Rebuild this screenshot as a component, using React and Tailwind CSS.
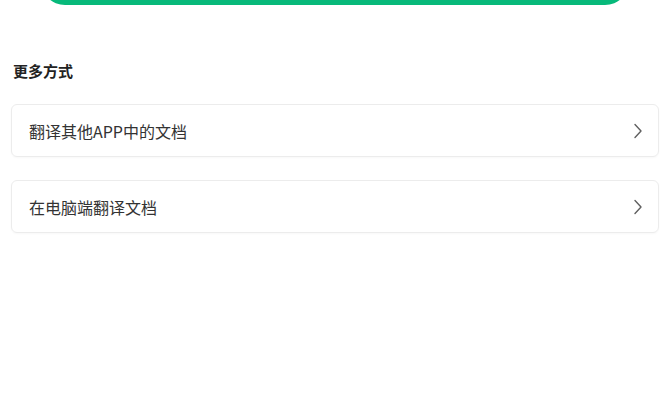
const items = ["翻译其他APP中的文档", "在电脑端翻译文档"];

const Chevron = () => (
  <svg width="10" height="16" viewBox="0 0 10 16" fill="none">
    <path d="M2 1.5 L8 8 L2 14.5" stroke="#5f5f5f" strokeWidth="1.4" strokeLinecap="round" strokeLinejoin="round" />
  </svg>
);

const App = () => {
  return (
    <div className="w-[670px] h-[415px] bg-white overflow-hidden font-['Noto_Sans_CJK_SC','Noto_Sans',sans-serif]">
      {/* main action button, mostly scrolled off the top */}
      <div className="mx-[41px] -mt-[43px] h-[48px] rounded-full bg-[#07b97a]" />

      <div className="px-[11px] pt-[56px]">
        <p className="px-[2px] h-[20px] leading-[20px] text-[15px] font-bold text-[#222]">
          更多方式
        </p>

        <div className="mt-[23px] flex flex-col gap-[23px]">
          {items.map(label => (
            <div
              key={label}
              className="h-[53px] flex items-center justify-between pl-[17px] pr-[15px] rounded-[6px] border border-[#ececec] shadow-[0_1px_2px_rgba(0,0,0,0.03)]"
            >
              <span className="text-[16px] text-[#333]">{label}</span>
              <Chevron />
            </div>
          ))}
        </div>
      </div>
    </div>
  );
};

export default App;
